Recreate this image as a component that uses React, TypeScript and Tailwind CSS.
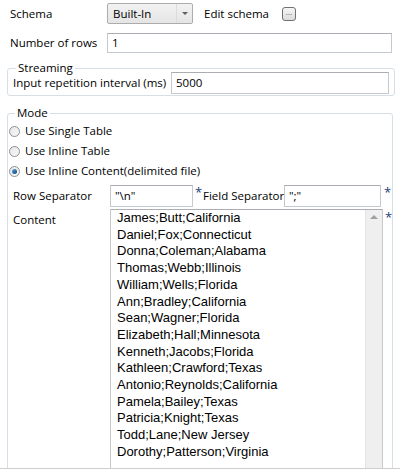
import React from 'react';

const ROWS = [
  'James;Butt;California',
  'Daniel;Fox;Connecticut',
  'Donna;Coleman;Alabama',
  'Thomas;Webb;Illinois',
  'William;Wells;Florida',
  'Ann;Bradley;California',
  'Sean;Wagner;Florida',
  'Elizabeth;Hall;Minnesota',
  'Kenneth;Jacobs;Florida',
  'Kathleen;Crawford;Texas',
  'Antonio;Reynolds;California',
  'Pamela;Bailey;Texas',
  'Patricia;Knight;Texas',
  'Todd;Lane;New Jersey',
  'Dorothy;Patterson;Virginia',
];

const UI_FONT = "[font-family:'Segoe_UI','Open_Sans',sans-serif] text-[11.5px]";

function TextBox({ value, className }: { value: string; className: string }) {
  return (
    <div
      className={`flex shrink-0 items-center border border-[#c5cad1] border-t-[#abadb3] bg-white px-[4px] text-black ${className}`}
    >
      {value}
    </div>
  );
}

function Radio({ checked, label }: { checked?: boolean; label: string }) {
  return (
    <div className="flex h-[20px] items-center pl-[1px]">
      <span className="flex h-[11px] w-[11px] items-center justify-center rounded-full border border-[#8e8f8f] bg-gradient-to-br from-[#e6e6e6] to-[#f8f8f8]">
        {checked && (
          <span className="h-[5px] w-[5px] rounded-full bg-gradient-to-br from-[#5aa6e0] to-[#0d3f84]" />
        )}
      </span>
      <span className="ml-[5px]">{label}</span>
    </div>
  );
}

function Required() {
  return <span className="self-start pt-[1px] leading-none text-[13px] text-[#1c3b7a]">*</span>;
}

export default function App() {
  return (
    <div className={`h-[470px] w-[400px] overflow-hidden whitespace-nowrap bg-white ${UI_FONT} text-black`}>
      <div className="h-[469px] overflow-hidden border-b border-[#cfcfcf]">
        {/* Schema */}
        <div className="mt-[3px] flex h-[21px] items-center">
          <span className="w-[107px] shrink-0 pl-[10px]">Schema</span>
          <div className="flex h-[21px] w-[86px] items-center rounded-[2px] border border-[#acacac] bg-gradient-to-b from-[#f2f2f2] to-[#e5e5e5]">
            <span className="flex-1 pl-[5px]">Built-In</span>
            <span className="flex h-full w-[16px] items-center justify-center border-l border-[#dcdcdc]">
              <span className="h-0 w-0 border-x-[3px] border-t-[3px] border-x-transparent border-t-[#5f5f5f]" />
            </span>
          </div>
          <span className="ml-[11px]">Edit schema</span>
          <span className="ml-[13px] flex h-[14px] w-[14px] items-start justify-center rounded-[3px] border border-[#707070] bg-gradient-to-b from-[#f6f6f6] to-[#dcdcdc] text-[8px] leading-[7px] text-[#3c5a86]">
            ...
          </span>
        </div>

        {/* Number of rows */}
        <div className="mt-[9px] flex h-[20px] items-center">
          <span className="w-[107px] shrink-0 pl-[10px]">Number of rows</span>
          <TextBox value="1" className="h-[20px] w-[285px]" />
        </div>

        {/* Streaming */}
        <fieldset className="mx-[7px] mt-[8px] h-[35px] rounded-[3px] border border-[#d5dfe5] px-[5px]">
          <legend className="ml-[3px] px-[2px] leading-[14px]">Streaming</legend>
          <div className="-mt-[3px] flex h-[22px] items-center">
            <span className="w-[158px] shrink-0">Input repetition interval (ms)</span>
            <TextBox value="5000" className="h-[22px] w-[218px]" />
          </div>
        </fieldset>

        {/* Mode */}
        <fieldset className="mx-[7px] mt-[10px] h-[400px] rounded-[3px] border border-[#d5dfe5]">
          <legend className="ml-[7px] px-[2px] leading-[14px]">Mode</legend>
          <div className="mt-[1px] flex flex-col">
            <Radio label="Use Single Table" />
            <Radio label="Use Inline Table" />
            <Radio checked label="Use Inline Content(delimited file)" />
          </div>

          <div className="mt-[4px] flex h-[22px] items-center">
            <span className="w-[102px] shrink-0 pl-[5px]">Row Separator</span>
            <TextBox value={'"\\n"'} className="h-[22px] w-[83px]" />
            <span className="ml-[2px] flex h-full w-[8px] shrink-0"><Required /></span>
            <span className="w-[81px] shrink-0">Field Separator</span>
            <TextBox value={'";"'} className="h-[22px] w-[97px]" />
            <span className="ml-[3px] flex h-full shrink-0"><Required /></span>
          </div>

          <div className="mt-[2px] flex">
            <span className="w-[102px] shrink-0 pl-[5px] pt-[2px]">Content</span>
            <div className="flex h-[330px] w-[273px] shrink-0 border border-[#c5cad1] border-t-[#abadb3] bg-white">
              <div className="flex-1 pl-[6px] [font-family:'Liberation_Sans',Arial,sans-serif] text-[13px] leading-[16.7px] text-black">
                {ROWS.map((r) => (
                  <div key={r}>{r}</div>
                ))}
              </div>
              <div className="flex w-[17px] flex-col items-center border-l border-[#e4e4e4] bg-[#efefef] pt-[5px]">
                <span className="h-0 w-0 border-x-[4px] border-b-[4px] border-x-transparent border-b-[#a0a0a0]" />
              </div>
            </div>
            <span className="ml-[2px]"><Required /></span>
          </div>
        </fieldset>
      </div>
    </div>
  );
}
